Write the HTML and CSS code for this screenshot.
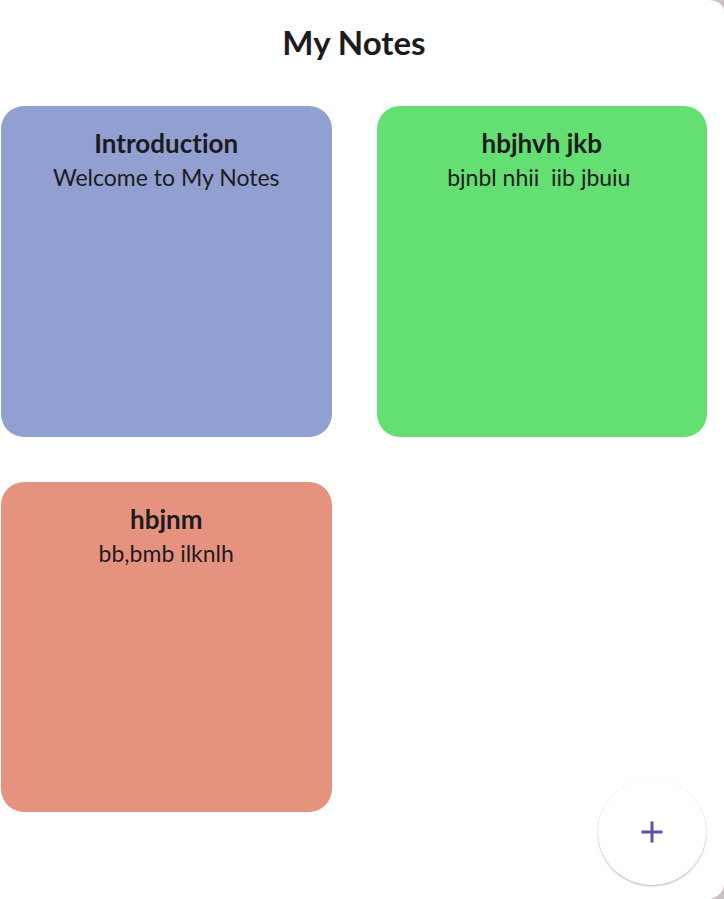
FILE: index.html
```html
<!DOCTYPE html>
<html lang="en">
<head>
<meta charset="utf-8">
<title>My Notes</title>
<link rel="stylesheet" href="styles.css">
</head>
<body>
<main class="screen">
  <h1 class="title">My Notes</h1>
  <section class="notes">
    <article class="note note-blue"><h2>Introduction</h2><p>Welcome to My Notes</p></article>
    <article class="note note-green"><h2>hbjhvh jkb</h2><p>bjnbl nhii  iib jbuiu </p></article>
    <article class="note note-red"><h2>hbjnm</h2><p>bb,bmb ilknlh</p></article>
  </section>
  <button class="add" type="button" aria-label="Add note">
    <svg viewBox="0 0 22 22" width="22" height="22" aria-hidden="true"><path d="M11 .5v21M.5 11h21" fill="none" stroke="#6750a4" stroke-width="3"/></svg>
  </button>
</main>
</body>
</html>
```
FILE: styles.css
```css
* { box-sizing: border-box; }
body { margin: 0; background: #c9c2c2; color: #1d1b20; font-family: Lato, sans-serif; font-variant-ligatures: none; }
.screen { position: relative; min-height: 100vh; padding: 20px 17px 0 1px; background: #fff; border-radius: 0 16px 16px 0 / 0 11px 16px 0; }
.title { margin: 0; font-size: 33px; line-height: 44px; font-weight: 700; text-align: center; }
.notes { display: grid; grid-template-columns: 1fr 1fr; gap: 45px; margin-top: 42px; }
.note { aspect-ratio: 1; padding: 21px; border-radius: 23px; text-align: center; }
.note h2 { margin: 0; font-size: 26px; line-height: 32px; font-weight: 700; }
.note p { margin: 0; font-size: 23px; line-height: 36px; white-space: pre-wrap; }
.note-blue { background: #929fd1; }
.note-green { background: #64df72; }
.note-red { background: #e5937f; }
.add { position: absolute; right: 18px; bottom: 14px; display: grid; place-items: center; width: 108px; height: 106px; padding: 0; border: 0; border-radius: 50%; background: #fff; box-shadow: 0 1px 2px rgba(0,0,0,.3); }
.add svg { display: block; }
```
